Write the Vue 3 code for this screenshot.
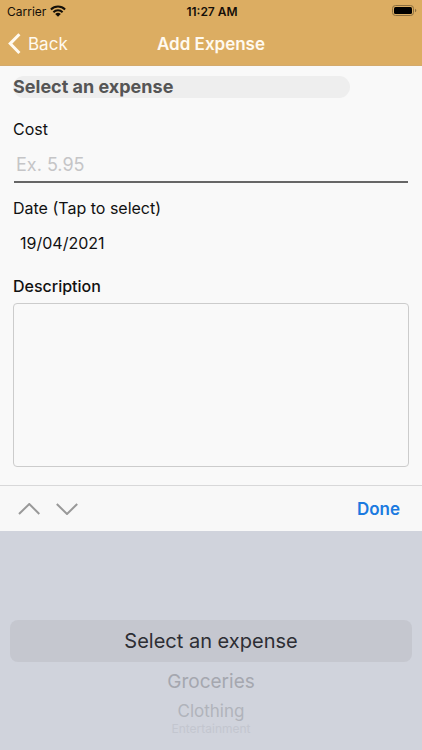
<script setup>
import { ref } from 'vue'

const cost = ref('')
const date = ref('19/04/2021')
const description = ref('')
const selected = ref('Select an expense')
const options = [
  { name: 'Select an expense', depth: 'current' },
  { name: 'Groceries', depth: 'near' },
  { name: 'Clothing', depth: 'far' },
  { name: 'Entertainment', depth: 'edge' },
]
</script>

<template>
  <div class="screen">
    <header class="header">
      <div class="status">
        <div class="carrier">
          <span>Carrier</span>
          <svg class="wifi" viewBox="0 0 16 12" aria-hidden="true">
            <path d="M.9 4.5a10 10 0 0 1 14.2 0" />
            <path d="M3.4 7.2a6.5 6.5 0 0 1 9.2 0" />
            <path class="dot" d="M8 11.8 5.2 9a4 4 0 0 1 5.6 0z" />
          </svg>
        </div>
        <time class="clock">11:27 AM</time>
        <svg class="battery" viewBox="0 0 25 12" aria-hidden="true">
          <rect class="shell" x="0.5" y="0.5" width="21" height="10" rx="3" />
          <rect x="2" y="2" width="18" height="7" rx="1.5" />
          <path class="tip" d="M23 3.8c1.8.6 1.8 2.8 0 3.4z" />
        </svg>
      </div>
      <nav class="nav">
        <button class="back" type="button">
          <svg viewBox="0 0 13 22" aria-hidden="true"><path d="M11.4 1.2 2.2 10.6l9.2 9.4" /></svg>
          <span>Back</span>
        </button>
        <h1 class="title">Add Expense</h1>
      </nav>
    </header>

    <main class="form">
      <button class="expense" type="button">{{ selected }}</button>
      <label class="label cost-label" for="cost">Cost</label>
      <input id="cost" v-model="cost" class="cost" type="text" inputmode="decimal" placeholder="Ex. 5.95">
      <label class="label date-label" for="date">Date (Tap to select)</label>
      <input id="date" v-model="date" class="date" type="text" readonly>
      <label class="label description-label" for="description">Description</label>
      <textarea id="description" v-model="description" class="description"></textarea>
    </main>

    <div class="toolbar">
      <button class="step" type="button" aria-label="Previous field">
        <svg viewBox="0 0 22 12" aria-hidden="true"><path d="M1 11 11.3 1l10 10" /></svg>
      </button>
      <button class="step" type="button" aria-label="Next field">
        <svg viewBox="0 0 22 12" aria-hidden="true"><path d="M.8 1l10.2 10L21.2 1" /></svg>
      </button>
      <button class="done" type="button">Done</button>
    </div>

    <div class="picker" role="listbox" aria-label="Expense">
      <button
        v-for="option in options"
        :key="option.name"
        class="option"
        :class="option.depth"
        type="button"
        role="option"
        :aria-selected="option.name === selected"
        @click="selected = option.name"
      >{{ option.name }}</button>
    </div>
  </div>
</template>

<style>
body {
  margin: 0;
  background: #d0d3dc;
}
</style>

<style scoped>
.screen {
  display: flex;
  flex-direction: column;
  min-height: 100vh;
  background: #f9f9f9;
  color: #111;
  font-family: Inter, "Liberation Sans", sans-serif;
  font-size: 16px;
}
.screen *,
.screen {
  box-sizing: border-box;
}
button,
input,
textarea {
  margin: 0;
  padding: 0;
  border: 0;
  border-radius: 0;
  outline: 0;
  background: none;
  color: inherit;
  font: inherit;
}
svg {
  display: block;
  fill: none;
}
.header {
  height: 66px;
  background: #dcad62;
  border-bottom: 1px solid #d4aa6c;
}
.status {
  display: grid;
  grid-template-columns: 1fr auto 1fr;
  align-items: center;
  height: 22px;
  padding: 0 5px 0 7px;
  color: #140f08;
  font-size: 12px;
}
.carrier {
  display: flex;
  align-items: center;
  gap: 4px;
}
.wifi {
  width: 16px;
  height: 12px;
  stroke: #140f08;
  stroke-width: 2;
}
.wifi .dot {
  fill: #140f08;
  stroke: none;
}
.clock {
  font-weight: 600;
}
.battery {
  justify-self: end;
  width: 25px;
  height: 12px;
  fill: #000;
}
.battery .shell {
  fill: none;
  stroke: #8a6e40;
}
.battery .tip {
  fill: #8a6e40;
}
.nav {
  display: grid;
  grid-template-columns: 1fr auto 1fr;
  align-items: center;
  height: 43px;
  padding: 0 8px;
  color: #fffaf0;
}
.back {
  display: flex;
  align-items: center;
  gap: 7px;
  font-size: 17px;
}
.back svg {
  width: 13px;
  height: 22px;
  stroke: #fffaf0;
  stroke-width: 3;
}
.title {
  margin: 0;
  font-size: 17px;
  font-weight: 600;
}
.form {
  display: flex;
  flex-direction: column;
  padding: 10px 13px 18px;
}
.expense {
  width: 85%;
  height: 22px;
  border-radius: 11px;
  background: #eee;
  color: #555;
  font-size: 18px;
  font-weight: 700;
  line-height: 22px;
  text-align: left;
}
.label {
  line-height: 22px;
}
.cost-label {
  margin-top: 20px;
}
.cost {
  height: 36px;
  margin: 7px 1px 0;
  padding: 0 2px;
  border-bottom: 2px solid #666;
  font-size: 18px;
}
.cost::placeholder {
  color: #c5c5c7;
  opacity: 1;
}
.date-label {
  margin-top: 14px;
}
.date {
  height: 24px;
  margin-top: 12px;
  padding: 0 7px;
}
.description-label {
  margin-top: 20px;
  font-weight: 500;
}
.description {
  height: 164px;
  margin-top: 6px;
  padding: 8px;
  border: 1px solid #ccc;
  border-radius: 4px;
  resize: none;
}
.toolbar {
  display: flex;
  align-items: center;
  gap: 16px;
  height: 46px;
  padding: 0 22px 0 18px;
  border-top: 1px solid #d8d8d9;
  background: #f8f8f8;
}
.step svg {
  width: 22px;
  height: 12px;
  stroke: #999;
  stroke-width: 2;
}
.done {
  margin-left: auto;
  color: #1b7ae0;
  font-size: 17px;
  font-weight: 600;
}
.picker {
  display: flex;
  flex: 1;
  flex-direction: column;
  align-items: center;
  padding: 89px 10px 12px;
  background: #d0d3dc;
}
.option {
  width: 100%;
  text-align: center;
}
.current {
  height: 42px;
  border-radius: 8px;
  background: #c5c7cf;
  color: #2d2e34;
  font-size: 20px;
}
.near {
  height: 38px;
  color: #a5a7af;
  font-size: 19px;
}
.far {
  height: 22px;
  color: #b0b3bb;
  font-size: 17px;
  line-height: 18px;
}
.edge {
  height: 14px;
  color: #c3c6cf;
  font-size: 12px;
  line-height: 14px;
}
</style>
